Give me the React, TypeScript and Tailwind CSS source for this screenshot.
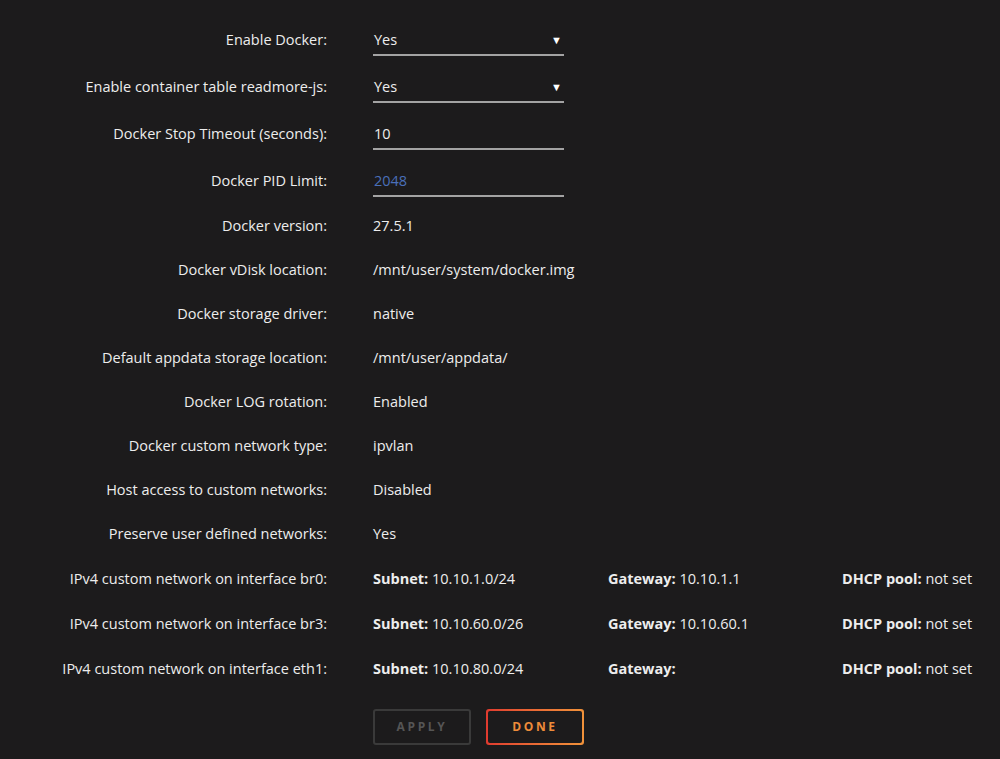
import React from "react";

const font = { fontFamily: "'Open Sans', 'Liberation Sans', sans-serif" };

const Label = ({ children }: { children: React.ReactNode }) => (
  <div className="w-[328px] shrink-0 text-right pr-[1px]">{children}</div>
);

const SelectField = ({ value }: { value: string }) => (
  <div className="w-[191px] h-[32px] flex items-center justify-between border-b-2 border-[#a3a3a3] pt-[2px] pl-[1px] pr-[2px]">
    <span>{value}</span>
    <span className="text-[11px] leading-none text-white">▼</span>
  </div>
);

const InputField = ({ value, blue }: { value: string; blue?: boolean }) => (
  <div
    className={`w-[191px] h-[32px] flex items-center border-b-2 border-[#a3a3a3] pt-[2px] pl-[1px] ${
      blue ? "text-[#4a6fb8]" : ""
    }`}
  >
    {value}
  </div>
);

const infoRows: [string, string][] = [
  ["Docker version:", "27.5.1"],
  ["Docker vDisk location:", "/mnt/user/system/docker.img"],
  ["Docker storage driver:", "native"],
  ["Default appdata storage location:", "/mnt/user/appdata/"],
  ["Docker LOG rotation:", "Enabled"],
  ["Docker custom network type:", "ipvlan"],
  ["Host access to custom networks:", "Disabled"],
  ["Preserve user defined networks:", "Yes"],
];

const networks = [
  { iface: "br0", subnet: "10.10.1.0/24", gateway: "10.10.1.1" },
  { iface: "br3", subnet: "10.10.60.0/26", gateway: "10.10.60.1" },
  { iface: "eth1", subnet: "10.10.80.0/24", gateway: "" },
];

export default function App() {
  return (
    <div
      className="min-h-screen w-full bg-[#1c1b1c] text-[#ededed] text-[14.5px] pt-[16px]"
      style={font}
    >
      <div className="h-[47px] flex items-center gap-[45px]">
        <Label>Enable Docker:</Label>
        <SelectField value="Yes" />
      </div>
      <div className="h-[47px] flex items-center gap-[45px]">
        <Label>Enable container table readmore-js:</Label>
        <SelectField value="Yes" />
      </div>
      <div className="h-[47px] flex items-center gap-[45px]">
        <Label>Docker Stop Timeout (seconds):</Label>
        <InputField value="10" />
      </div>
      <div className="h-[47px] flex items-center gap-[45px]">
        <Label>Docker PID Limit:</Label>
        <InputField value="2048" blue />
      </div>

      {infoRows.map(([label, value]) => (
        <div key={label} className="h-[44px] flex items-center gap-[45px]">
          <Label>{label}</Label>
          <div>{value}</div>
        </div>
      ))}

      {networks.map((n) => (
        <div key={n.iface} className="h-[45px] flex items-center gap-[45px]">
          <Label>IPv4 custom network on interface {n.iface}:</Label>
          <div className="flex">
            <div className="w-[235px]">
              <span className="font-bold">Subnet:</span> {n.subnet}
            </div>
            <div className="w-[234px]">
              <span className="font-bold">Gateway:</span> {n.gateway}
            </div>
            <div>
              <span className="font-bold">DHCP pool:</span> not set
            </div>
          </div>
        </div>
      ))}

      <div className="flex gap-[15px] pl-[373px] mt-[18px]">
        <button className="w-[98px] h-[36px] rounded-[3px] border-2 border-[#3a3a3a] text-[#555555] text-[12px] font-bold tracking-[0.22em]">
          APPLY
        </button>
        <div className="w-[98px] h-[36px] rounded-[3px] p-[2px] bg-gradient-to-r from-[#e03a2f] to-[#f0923a]">
          <button className="w-full h-full rounded-[2px] bg-[#1c1b1c] text-[#ee8c3a] text-[12px] font-bold tracking-[0.22em]">
            DONE
          </button>
        </div>
      </div>
    </div>
  );
}
